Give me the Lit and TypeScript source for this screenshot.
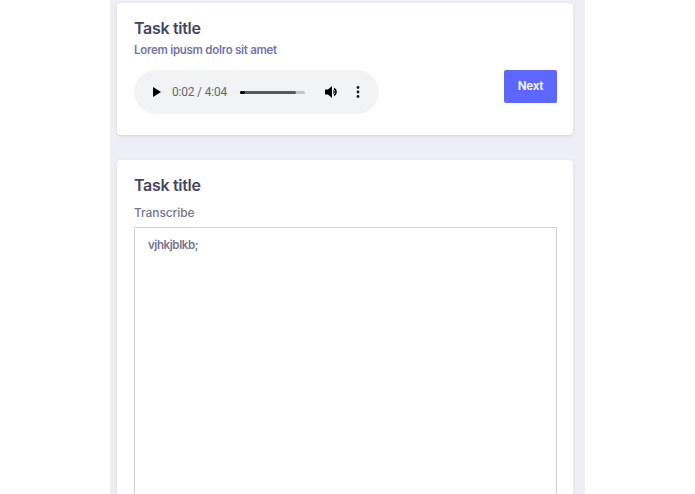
import { LitElement, html, css } from "lit";
import { customElement } from "lit/decorators.js";

@customElement("app-root")
export class AppRoot extends LitElement {
  static styles = css`
    :host {
      display: block;
      height: 494px;
      overflow: hidden;
      background: #fff;
      font-family: Inter, "Noto Sans", sans-serif;
    }
    .column {
      width: 475px;
      height: 494px;
      margin: 0 auto;
      box-sizing: border-box;
      padding: 3px 12px 0 7px;
      background: #eeeff6;
      display: flex;
      flex-direction: column;
      gap: 25px;
      overflow: hidden;
    }
    .card {
      flex: none;
      background: #fff;
      border-radius: 4px;
      box-shadow: 0 1px 3px rgba(60, 60, 90, 0.16);
      padding: 15px 16px 0 17px;
      box-sizing: border-box;
    }
    .first { height: 132px; }
    .second { height: 420px; }
    h2 {
      margin: 0;
      font-size: 16px;
      line-height: 20px;
      font-weight: 600;
      letter-spacing: -0.3px;
      color: #44465f;
    }
    .sub {
      margin: 5px 0 0;
      font-size: 11.5px;
      line-height: 15px;
      font-weight: 600;
      letter-spacing: -0.28px;
      color: #7775a6;
    }
    .row {
      display: flex;
      justify-content: space-between;
      align-items: flex-start;
      margin-top: 12px;
    }
    .player {
      width: 245px;
      height: 44px;
      border-radius: 22px;
      background: #f1f3f4;
      display: flex;
      align-items: center;
      box-sizing: border-box;
      padding-left: 18px;
    }
    .play { width: 8px; height: 10px; fill: #000; flex: none; margin-left: 1px; }
    .time {
      margin-left: 11px;
      font-size: 12px;
      letter-spacing: -0.2px;
      color: #68696d;
      font-family: Roboto, sans-serif;
      white-space: nowrap;
      width: 56px;
    }
    .track {
      margin-left: 12px;
      width: 65px;
      height: 3px;
      border-radius: 2px;
      background: #c4c5c6;
      position: relative;
      flex: none;
    }
    .buffered {
      width: 56px;
      height: 3px;
      border-radius: 2px;
      background: #5a5a5c;
    }
    .played {
      position: absolute;
      left: 0;
      top: 0;
      width: 5px;
      height: 3px;
      border-radius: 2px;
      background: #000;
    }
    .vol { margin-left: 20px; width: 14px; height: 14px; flex: none; }
    .more { margin-left: 17px; width: 4px; height: 12px; fill: #1a1a1a; flex: none; }
    button {
      width: 53px;
      height: 33px;
      border: 0;
      padding: 0 0 2px;
      border-radius: 2px;
      background: #5d66ff;
      color: #f2f3ff;
      font: 700 11.5px Inter, sans-serif;
      letter-spacing: -0.25px;
    }
    label {
      display: block;
      margin-top: 10px;
      font-size: 12px;
      line-height: 16px;
      font-weight: 500;
      letter-spacing: -0.1px;
      color: #75768f;
    }
    textarea {
      display: block;
      width: 423px;
      height: 340px;
      margin-top: 6px;
      box-sizing: border-box;
      border: 1px solid #d2d2d6;
      border-radius: 0;
      outline: 0;
      resize: none;
      padding: 9px 13px;
      font: 600 11.5px/16px Inter, sans-serif;
      letter-spacing: -0.4px;
      color: #75768f;
      background: #fff;
    }
  `;

  render() {
    return html`
      <div class="column">
        <section class="card first">
          <h2>Task title</h2>
          <p class="sub">Lorem ipusm dolro sit amet</p>
          <div class="row">
            <div class="player">
              <svg class="play" viewBox="0 0 8 10"><path d="M0 0L8 5L0 10Z" /></svg>
              <span class="time">0:02 / 4:04</span>
              <div class="track">
                <div class="buffered"></div>
                <div class="played"></div>
              </div>
              <svg class="vol" viewBox="0 0 14 14">
                <path d="M0 4.5H3L7 1V13L3 9.5H0Z" fill="#000" />
                <path d="M9 3.5A4 4 0 0 1 9 10.5" fill="none" stroke="#000" stroke-width="1.6" />
                <path d="M8.5 5.5A2 2 0 0 1 8.5 8.5" fill="none" stroke="#000" stroke-width="1.2" />
              </svg>
              <svg class="more" viewBox="0 0 4 12">
                <circle cx="2" cy="1.5" r="1.4" />
                <circle cx="2" cy="6" r="1.4" />
                <circle cx="2" cy="10.5" r="1.4" />
              </svg>
            </div>
            <button>Next</button>
          </div>
        </section>
        <section class="card second">
          <h2>Task title</h2>
          <label for="t">Transcribe</label>
          <textarea id="t" .value=${"vjhkjblkb;"}></textarea>
        </section>
      </div>
    `;
  }
}
